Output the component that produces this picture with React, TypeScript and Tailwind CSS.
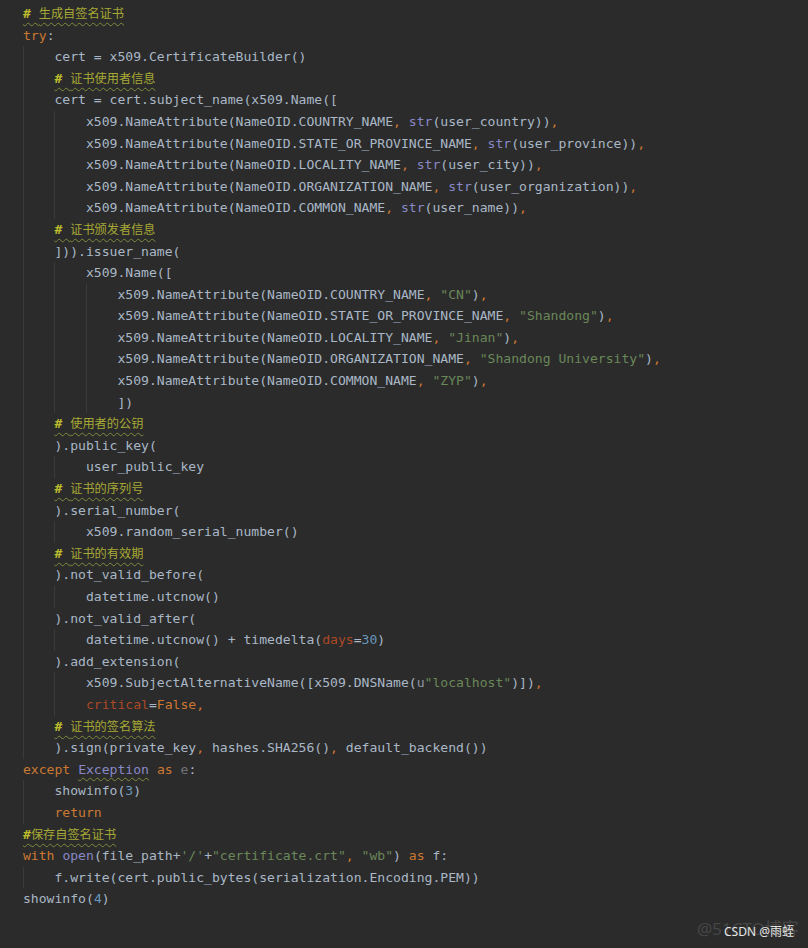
import React from 'react';

const lines: string[] = [
  '# 生成自签名证书',
  'try:',
  '    cert = x509.CertificateBuilder()',
  '    # 证书使用者信息',
  '    cert = cert.subject_name(x509.Name([',
  '        x509.NameAttribute(NameOID.COUNTRY_NAME, str(user_country)),',
  '        x509.NameAttribute(NameOID.STATE_OR_PROVINCE_NAME, str(user_province)),',
  '        x509.NameAttribute(NameOID.LOCALITY_NAME, str(user_city)),',
  '        x509.NameAttribute(NameOID.ORGANIZATION_NAME, str(user_organization)),',
  '        x509.NameAttribute(NameOID.COMMON_NAME, str(user_name)),',
  '    # 证书颁发者信息',
  '    ])).issuer_name(',
  '        x509.Name([',
  '            x509.NameAttribute(NameOID.COUNTRY_NAME, "CN"),',
  '            x509.NameAttribute(NameOID.STATE_OR_PROVINCE_NAME, "Shandong"),',
  '            x509.NameAttribute(NameOID.LOCALITY_NAME, "Jinan"),',
  '            x509.NameAttribute(NameOID.ORGANIZATION_NAME, "Shandong University"),',
  '            x509.NameAttribute(NameOID.COMMON_NAME, "ZYP"),',
  '            ])',
  '    # 使用者的公钥',
  '    ).public_key(',
  '        user_public_key',
  '    # 证书的序列号',
  '    ).serial_number(',
  '        x509.random_serial_number()',
  '    # 证书的有效期',
  '    ).not_valid_before(',
  '        datetime.utcnow()',
  '    ).not_valid_after(',
  '        datetime.utcnow() + timedelta(days=30)',
  '    ).add_extension(',
  '        x509.SubjectAlternativeName([x509.DNSName(u"localhost")]),',
  '        critical=False,',
  '    # 证书的签名算法',
  '    ).sign(private_key, hashes.SHA256(), default_backend())',
  'except Exception as e:',
  '    showinfo(3)',
  '    return',
  '#保存自签名证书',
  'with open(file_path+\'/\'+"certificate.crt", "wb") as f:',
  '    f.write(cert.public_bytes(serialization.Encoding.PEM))',
  'showinfo(4)',
];

const keywords = new Set(['try', 'except', 'as', 'return', 'with', 'False']);
const builtins = new Set(['str', 'open', 'Exception']);

// split one line of code into coloured pieces
const tokenize = (code: string) => {
  const out: { text: string; cls: string }[] = [];
  const re = /(u?"[^"]*"|'[^']*'|\b\d+\b|[A-Za-z_][A-Za-z0-9_]*|,|[^A-Za-z0-9_,"']+)/g;
  let m: RegExpExecArray | null;
  while ((m = re.exec(code))) {
    const t = m[0];
    const rest = code.slice(re.lastIndex);
    let cls = 'text-[#a9b7c6]';
    if (/^u?["']/.test(t)) cls = 'text-[#6a8759]';
    else if (/^\d+$/.test(t)) cls = 'text-[#6897bb]';
    else if (t === ',') cls = 'text-[#cc7832]';
    else if (keywords.has(t)) cls = 'text-[#cc7832]';
    else if (t === 'Exception')
      cls = 'text-[#8888c6] underline decoration-wavy decoration-[#7f8a3c] underline-offset-[3px] decoration-1';
    else if (builtins.has(t)) cls = 'text-[#8888c6]';
    else if (/^[A-Za-z_]/.test(t) && rest.startsWith('=') && !rest.startsWith('==')) cls = 'text-[#aa4926]';
    else if (t === 'e' && code.startsWith('except')) cls = 'text-[#72737a]';
    if (t.startsWith('u"')) {
      out.push({ text: 'u', cls: 'text-[#8f96a3]' });
      out.push({ text: t.slice(1), cls });
    } else {
      out.push({ text: t, cls });
    }
  }
  return out;
};

const CodeLine: React.FC<{ line: string }> = ({ line }) => {
  const body = line.trimStart();
  const depth = (line.length - body.length) / 4;
  const isComment = body.startsWith('#');
  const hasSpace = body.startsWith('# ');

  return (
    <div className="flex h-[21.6px] items-center whitespace-pre">
      {Array.from({ length: depth }).map((_, i) => (
        <span key={i} className="h-full w-[4ch] shrink-0 border-l border-[#3b3b3b]" />
      ))}
      {isComment ? (
        <span className="underline decoration-wavy decoration-[#7f8a3c] decoration-1 underline-offset-[4px]">
          <span className="font-bold text-[#bcbc2e]">{hasSpace ? '# ' : '#'}</span>
          <span className="text-[#a7a834] font-['Noto_Sans_CJK_SC',sans-serif] text-[12.2px]">
            {body.slice(hasSpace ? 2 : 1)}
          </span>
        </span>
      ) : (
        tokenize(body).map((t, i) => (
          <span key={i} className={t.cls}>
            {t.text}
          </span>
        ))
      )}
    </div>
  );
};

export default function App() {
  return (
    <div className="relative h-[948px] w-[808px] overflow-hidden bg-[#2b2b2b]">
      <div className="pl-[23px] pt-[3px] font-['DejaVu_Sans_Mono','Liberation_Mono',monospace] text-[13.08px]">
        {lines.map((l, i) => (
          <CodeLine key={i} line={l} />
        ))}
      </div>

      {/* watermarks */}
      <div className="absolute left-[697px] top-[917px] whitespace-nowrap font-['Noto_Sans','Noto_Sans_CJK_SC',sans-serif] text-[17px] leading-[24px] text-white/15">
        @51CTO博客
      </div>
      <div className="absolute left-[724px] top-[924px] whitespace-nowrap font-['Noto_Sans','Noto_Sans_CJK_SC',sans-serif] text-[12px] leading-[16px] text-[#e6e6e6]">
        CSDN @雨蛭
      </div>
    </div>
  );
}
